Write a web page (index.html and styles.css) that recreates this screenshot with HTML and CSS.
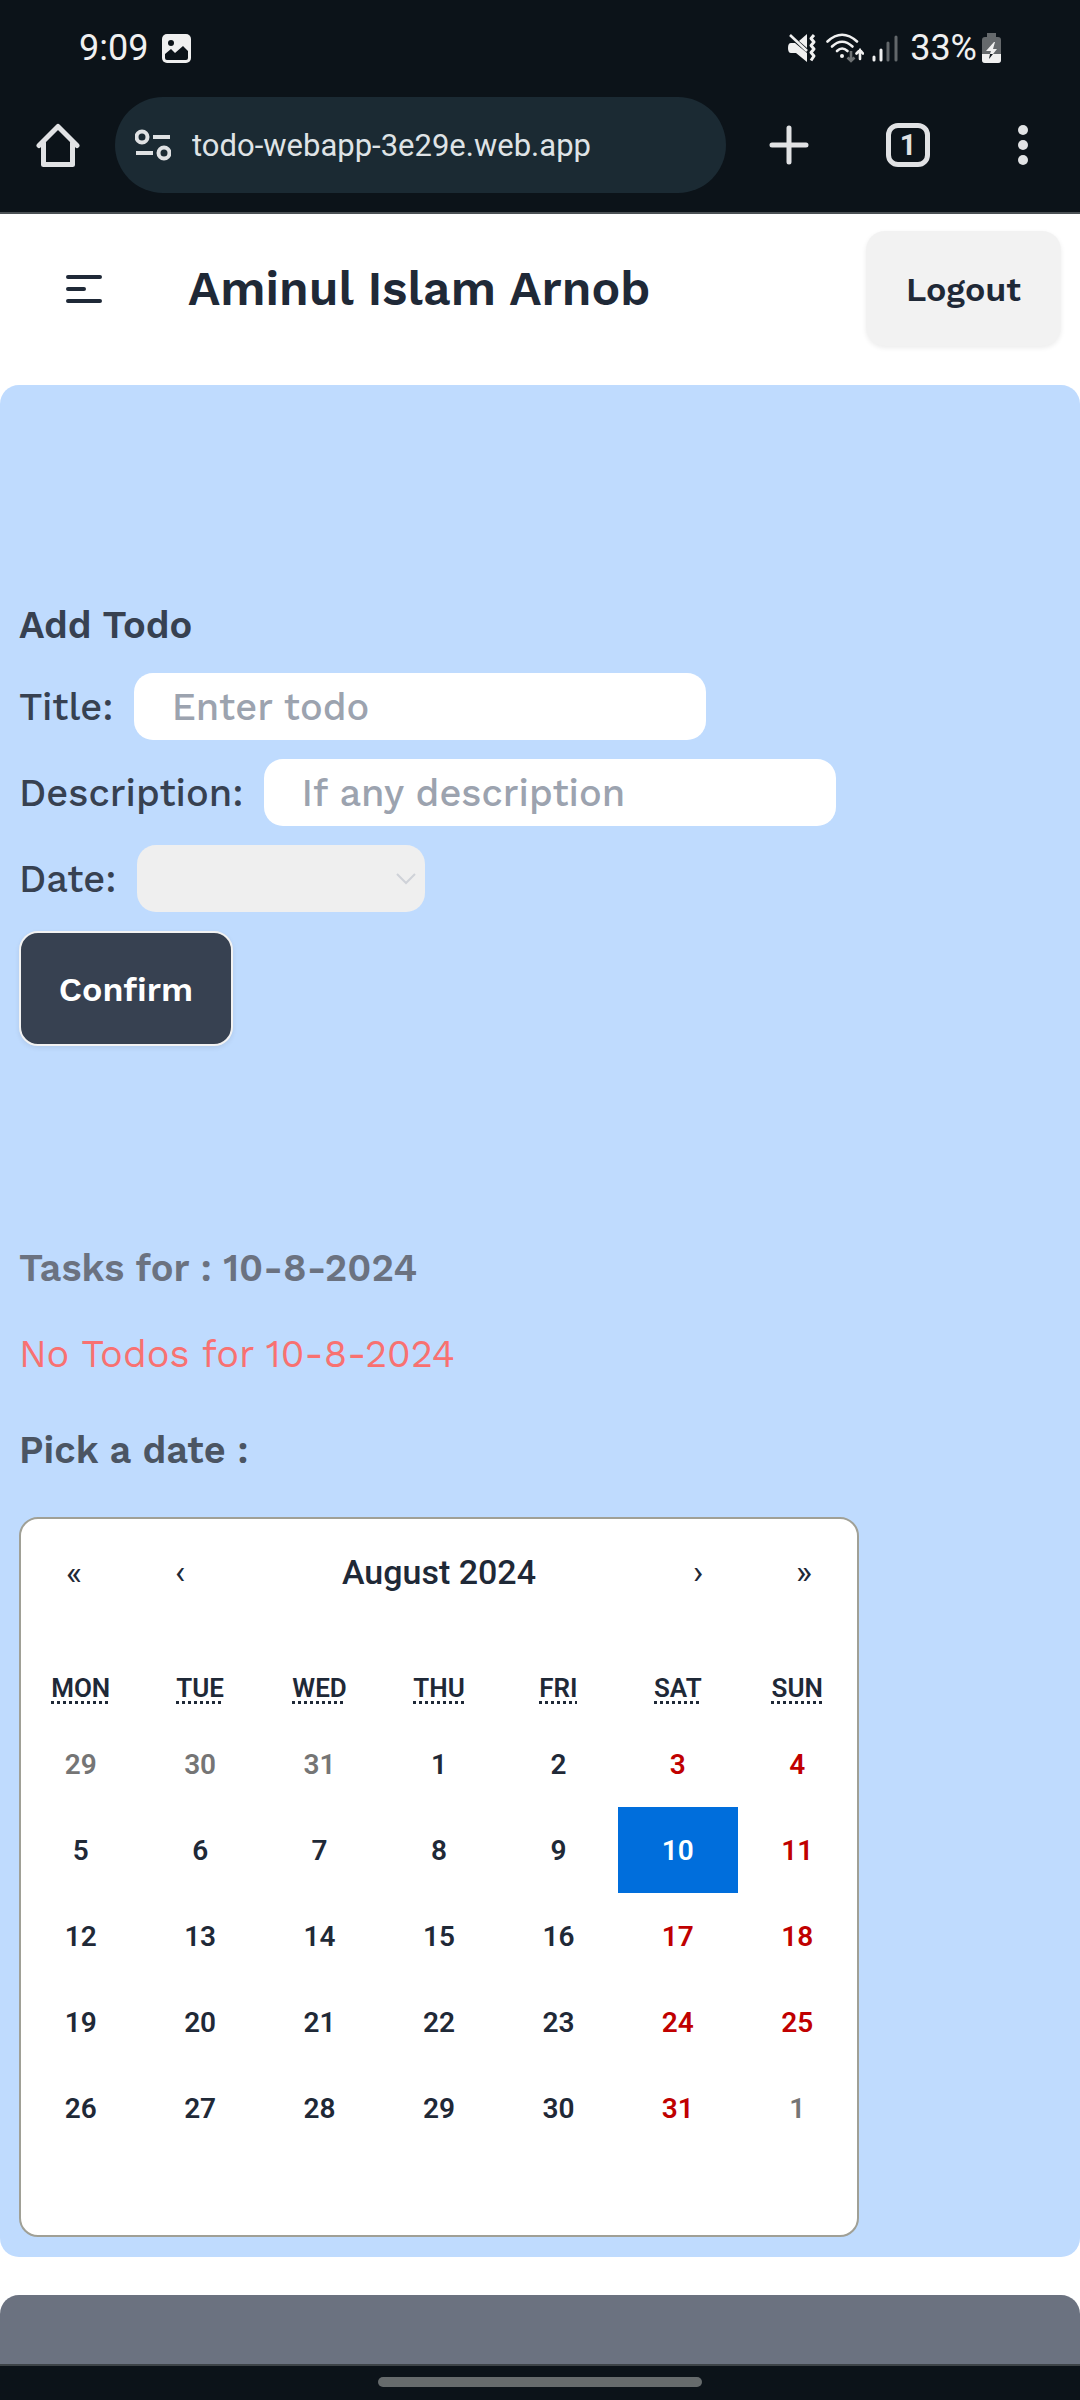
FILE: index.html
```html
<!DOCTYPE html>
<html lang="en">
<head>
<meta charset="utf-8">
<meta name="viewport" content="width=device-width, initial-scale=1">
<title>Todo</title>
<link rel="stylesheet" href="styles.css">
</head>
<body>
<div class="screen">
  <div class="chrome">
    <div class="status">
      <div class="status-group">
        <span>9:09</span>
        <svg class="status-photo" width="29" height="29" viewBox="0 0 29 29"><rect width="29" height="29" rx="5" fill="#f0f0f0"/><circle cx="9" cy="9" r="3" fill="#0c1319"/><path d="M3 20 9 15 13 19 21 12 26 17V24Q26 26 24 26H5Q3 26 3 24Z" fill="#0c1319"/></svg>
      </div>
      <div class="status-group status-right">
        <svg width="28" height="30" viewBox="0 0 28 30"><path d="M0 15Q0 10 3 10H7L19 20V29L8 20H3Q0 20 0 15Z" fill="#f0f0f0"/><path d="M11 8 19 1V15Z" fill="#f0f0f0"/><path d="M2 2 19 18" stroke="#f0f0f0" stroke-width="2.500"/><path d="M26 2 23 5.500 26 9 23 12.500 26 16 23 19.500 26 23 23 27.500" fill="none" stroke="#f0f0f0" stroke-width="3" stroke-linejoin="round"/></svg>
        <svg class="status-wifi" width="38" height="30" viewBox="0 0 38 30"><g fill="none" stroke="#f0f0f0" stroke-width="2.600" stroke-linecap="round"><path d="M1.500 8.500Q16-5 31 8.500"/><path d="M6 13.500Q16 4 26.500 13.500"/><path d="M11 18Q16 13 21.500 18"/><path d="M34 26V17M30.500 20.500 34 17 37 20.500"/></g><circle cx="16" cy="23" r="2" fill="#f0f0f0"/><path d="M25 18V28M21.500 24.500 25 28 28.500 24.500" fill="none" stroke="#6d7173" stroke-width="2.600"/></svg>
        <svg class="status-signal" width="26" height="30" viewBox="0 0 26 30" fill="none" stroke-width="3" stroke-linecap="round"><path d="M2 24V27M9 17V27" stroke="#f0f0f0"/><path d="M16 10V27M24 4V27" stroke="#62676a"/></svg>
        <span>33%</span>
        <svg class="status-battery" width="19" height="30" viewBox="0 0 19 30"><path d="M5 0H14V4H16Q19 4 19 7V27Q19 30 16 30H3Q0 30 0 27V7Q0 4 3 4H5Z" fill="#65696c"/><path d="M0 21H19V27Q19 30 16 30H3Q0 30 0 27Z" fill="#f0f0f0"/><path d="M12 9 4 18H9L8 21H11L15 16H11L13 9Z" fill="#f0f0f0"/><path d="M8 21H11L7 26Z" fill="#0c1319"/></svg>
      </div>
    </div>
    <div class="toolbar">
      <button class="tool" aria-label="Home"><svg width="44" height="44" viewBox="0 0 44 44" fill="none" stroke="#e1e2e4" stroke-width="5" stroke-linejoin="round" stroke-linecap="round"><path d="M3 22.500 22 3.500 41 22.500"/><path d="M7.500 20V41.500H36.500V20"/></svg></button>
      <label class="address">
        <svg width="36" height="32" viewBox="0 0 36 32" fill="none" stroke="#dfe1e3" stroke-width="4"><circle cx="7" cy="8" r="5.500"/><path d="M18 8H35M1 24H18"/><circle cx="29" cy="24" r="5.500"/></svg>
        <input class="address-input" type="text" value="todo-webapp-3e29e.web.app" aria-label="Address">
      </label>
      <button class="tool tool-new" aria-label="New tab"><svg width="40" height="40" viewBox="0 0 40 40" fill="none" stroke="#e1e2e4" stroke-width="5" stroke-linecap="round"><path d="M20 3V37M3 20H37"/></svg></button>
      <button class="tool tool-tabs" aria-label="Tabs">1</button>
      <button class="tool tool-menu" aria-label="Menu"><svg width="10" height="42" viewBox="0 0 10 42" fill="#e1e2e4"><circle cx="5" cy="6" r="5"/><circle cx="5" cy="21" r="5"/><circle cx="5" cy="36" r="5"/></svg></button>
    </div>
  </div>

  <header class="header">
    <button class="menu-button" aria-label="Open menu"><svg width="38" height="38" viewBox="0 0 38 38" fill="none" stroke="#1f2937" stroke-width="4" stroke-linecap="round"><path d="M3 7H35M3 19H19M3 31H35"/></svg></button>
    <h1 class="name">Aminul Islam Arnob</h1>
    <button class="btn btn-logout">Logout</button>
  </header>

  <main class="panel">
    <form class="form">
      <h2 class="heading heading-form">Add Todo</h2>
      <div class="field"><label for="title">Title:</label><input class="input" id="title" type="text" placeholder="Enter todo"></div>
      <div class="field"><label for="description">Description:</label><input class="input" id="description" type="text" placeholder="If any description"></div>
      <div class="field"><label for="date">Date:</label>
        <span class="select-wrap"><select class="select" id="date"><option value=""></option></select><svg class="chevron" width="20" height="18" viewBox="0 0 20 18" fill="none" stroke="#cfd2d8" stroke-width="2"><path d="M1 4 10 13 19 4"/></svg></span>
      </div>
      <button class="btn btn-confirm" type="button">Confirm</button>
    </form>

    <h2 class="heading heading-tasks">Tasks for : 10-8-2024</h2>
    <p class="empty">No Todos for 10-8-2024</p>
    <h2 class="heading heading-pick">Pick a date :</h2>

    <section class="calendar">
      <div class="calendar-nav">
        <button class="arrow" aria-label="Previous year">«</button>
        <button class="arrow" aria-label="Previous month">‹</button>
        <button class="month">August 2024</button>
        <button class="arrow" aria-label="Next month">›</button>
        <button class="arrow" aria-label="Next year">»</button>
      </div>
      <table class="days">
        <thead><tr>
          <th><abbr title="Monday">MON</abbr></th><th><abbr title="Tuesday">TUE</abbr></th><th><abbr title="Wednesday">WED</abbr></th><th><abbr title="Thursday">THU</abbr></th><th><abbr title="Friday">FRI</abbr></th><th><abbr title="Saturday">SAT</abbr></th><th><abbr title="Sunday">SUN</abbr></th>
        </tr></thead>
        <tbody>
          <tr><td><button class="day other">29</button></td><td><button class="day other">30</button></td><td><button class="day other">31</button></td><td><button class="day">1</button></td><td><button class="day">2</button></td><td><button class="day weekend">3</button></td><td><button class="day weekend">4</button></td></tr>
          <tr><td><button class="day">5</button></td><td><button class="day">6</button></td><td><button class="day">7</button></td><td><button class="day">8</button></td><td><button class="day">9</button></td><td><button class="day active">10</button></td><td><button class="day weekend">11</button></td></tr>
          <tr><td><button class="day">12</button></td><td><button class="day">13</button></td><td><button class="day">14</button></td><td><button class="day">15</button></td><td><button class="day">16</button></td><td><button class="day weekend">17</button></td><td><button class="day weekend">18</button></td></tr>
          <tr><td><button class="day">19</button></td><td><button class="day">20</button></td><td><button class="day">21</button></td><td><button class="day">22</button></td><td><button class="day">23</button></td><td><button class="day weekend">24</button></td><td><button class="day weekend">25</button></td></tr>
          <tr><td><button class="day">26</button></td><td><button class="day">27</button></td><td><button class="day">28</button></td><td><button class="day">29</button></td><td><button class="day">30</button></td><td><button class="day weekend">31</button></td><td><button class="day other">1</button></td></tr>
        </tbody>
      </table>
    </section>
  </main>

  <footer class="footer"></footer>
  <div class="gesture"><span class="gesture-handle"></span></div>
</div>
</body>
</html>
```
FILE: styles.css
```css
* { box-sizing: border-box; }

body {
  margin: 0;
  background: #fff;
  color: #1f2937;
  font-family: "Work Sans", Inter, "Liberation Sans", sans-serif;
}

button, input, select {
  margin: 0;
  padding: 0;
  border: 0;
  background: none;
  color: inherit;
  font: inherit;
}

svg { display: block; flex: none; }
h1, h2, p { margin: 0; }

.screen {
  display: flex;
  flex-direction: column;
  min-height: 100vh;
}

/* Browser chrome */
.chrome {
  background: #0c1319;
  border-bottom: 2px solid #4b5155;
  font-family: Roboto, sans-serif;
}

.status {
  display: flex;
  justify-content: space-between;
  padding: 26px 79px 0;
  height: 97px;
  color: #f0f0f0;
  font-size: 36px;
  line-height: 44px;
}

.status-group { display: flex; align-items: center; height: 44px; }
.status-photo { margin-left: 14px; }
.status-wifi { margin-left: 10px; }
.status-signal { margin: 0 12px 0 8px; }
.status-battery { margin-left: 5px; }

.toolbar {
  display: flex;
  align-items: center;
  height: 115px;
  padding: 0 52px 19px 36px;
}

.tool { display: flex; align-items: center; justify-content: center; flex: none; }
.tool-new { margin-left: 43px; }

.tool-tabs {
  width: 44px;
  height: 44px;
  margin-left: 77px;
  border: 5px solid #e1e2e4;
  border-radius: 12px;
  color: #e1e2e4;
  font-size: 29px;
  font-weight: 700;
  line-height: 30px;
}

.tool-menu { margin-left: 88px; }

.address {
  display: flex;
  align-items: center;
  flex: 1;
  gap: 21px;
  height: 96px;
  margin-left: 35px;
  padding: 0 20px;
  border-radius: 48px;
  background: #1b2a33;
}

.address-input { flex: 1; min-width: 0; padding-top: 2px; color: #dfe3e6; font-size: 31px; line-height: 40px; }

/* Page header */
.header {
  display: flex;
  align-items: center;
  padding: 17px 19px 39px 65px;
}

.menu-button { margin-right: 85px; }
.name { flex: 1; font-size: 48px; font-weight: 600; line-height: 56px; }

.btn {
  height: 115px;
  padding: 0;
  border-radius: 19px;
  font-size: 34px;
  font-weight: 600;
  box-shadow: 0 2px 5px rgba(0, 0, 0, 0.08);
}

.btn-logout { width: 195px; background: #f2f2f2; }

/* Todo panel */
.panel {
  padding: 211px 19px 20px;
  border-radius: 19px;
  background: #bfdbfe;
}

.form {
  display: flex;
  flex-direction: column;
  align-items: flex-start;
  gap: 19px;
  color: #374151;
}

.heading { font-size: 38px; font-weight: 600; line-height: 58px; }

.field {
  display: flex;
  align-items: center;
  gap: 20px;
  font-size: 38px;
  font-weight: 500;
}

.input {
  width: 572px;
  height: 67px;
  padding: 0 38px;
  border-radius: 19px;
  background: #fff;
}

.input::placeholder { color: #9ca3af; opacity: 1; }

.select-wrap { position: relative; display: flex; }

.select {
  width: 288px;
  height: 67px;
  border-radius: 19px;
  background: #efefef;
  appearance: none;
}

.chevron { position: absolute; right: 9px; top: 25px; pointer-events: none; }

.btn-confirm {
  width: 214px;
  border: 2px solid #f2f2f2;
  background: #374151;
  color: #fff;
}

.heading-tasks { margin-top: 193px; color: #6b7280; }
.empty { margin-top: 28px; color: #f87171; font-size: 38px; line-height: 58px; }
.heading-pick { margin-top: 38px; color: #4b5563; }

/* Calendar */
.calendar {
  max-width: 840px;
  margin-top: 38px;
  padding-bottom: 84px;
  border: 2px solid #a0a096;
  border-radius: 19px;
  background: #fff;
  font-family: Roboto, sans-serif;
}

.calendar-nav { display: flex; height: 106px; margin-bottom: 34px; }
.arrow { width: 106px; font-size: 34px; }
.month { flex: 1; font-size: 34px; font-weight: 500; }

.days {
  width: 100%;
  border-collapse: collapse;
  table-layout: fixed;
  font-size: 28px;
  text-align: center;
}

.days th { height: 62px; padding: 0 0 4px; font-size: 26px; font-weight: 600; }
.days td { padding: 0; }
.days abbr { text-decoration: underline dotted 3px; text-underline-offset: 4px; }

.day { display: block; width: 100%; height: 86px; font-weight: 600; }
.other { color: #757575; }
.weekend { color: #c00000; }
.active { background: #006edc; color: #fff; }

/* Footer and gesture bar */
.footer {
  flex: 1;
  min-height: 69px;
  margin-top: 38px;
  border-radius: 19px 19px 0 0;
  background: #6b7280;
}

.gesture {
  display: flex;
  justify-content: center;
  padding: 11px 0 13px;
  border-top: 2px solid #3d4347;
  background: #0c1319;
}

.gesture-handle { width: 30%; height: 10px; border-radius: 5px; background: #666b6c; }
```
